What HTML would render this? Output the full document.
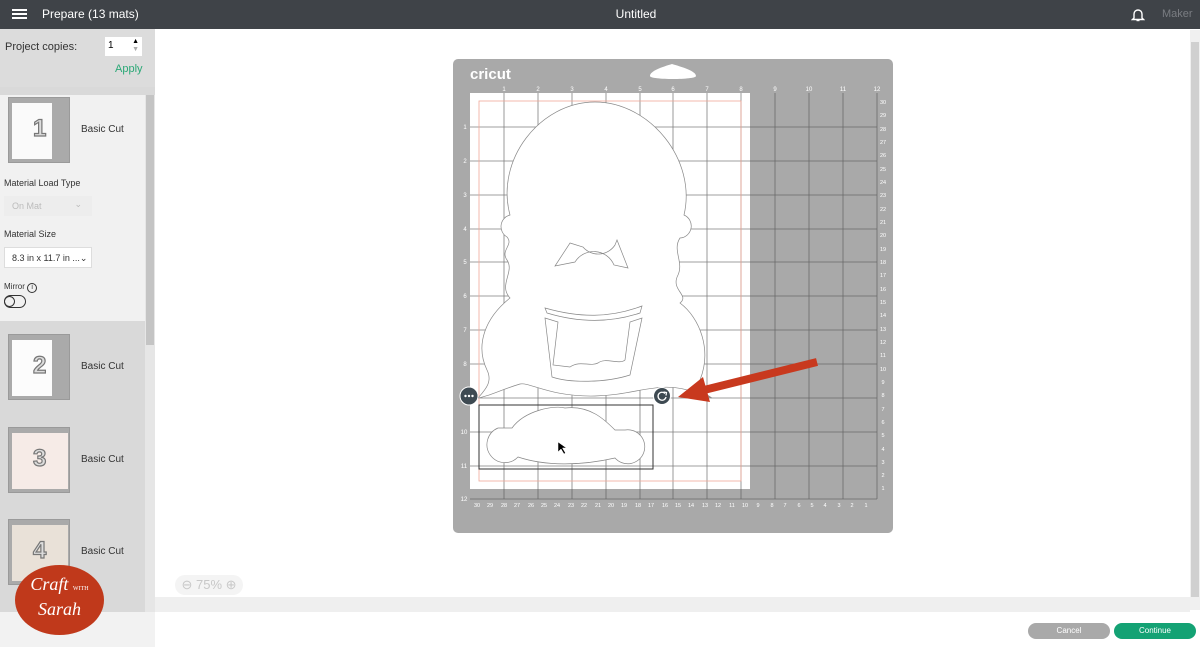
<!DOCTYPE html>
<html><head><meta charset="utf-8"><style>
*{margin:0;padding:0;box-sizing:border-box}
body{width:1200px;height:647px;overflow:hidden;background:#fff;font-family:"Liberation Sans",sans-serif;position:relative}
.abs{position:absolute}
.hdr{left:0;top:0;width:1200px;height:29px;background:#3f4348;color:#fff}
.lp{left:0;top:29px;width:155px;height:583px;background:#d9d9d9}
.t{font-size:10px;color:#333}
.thumb{position:absolute;left:8px;width:62px;height:66px;background:#aaa;border:1px solid #9a9a9a}
.num{position:absolute;font-size:24px;font-weight:bold;color:#ddd;-webkit-text-stroke:1.2px #777}
</style></head><body>
<div class="abs hdr">
  <div class="abs" style="left:12px;top:9px;width:15px;height:2px;background:#fff;box-shadow:0 4px 0 #fff,0 8px 0 #fff"></div>
  <div class="abs" style="left:42px;top:7px;font-size:12px">Prepare (13 mats)</div>
  <div class="abs" style="left:0;width:1272px;top:7px;text-align:center;font-size:12px">Untitled</div>
  <svg class="abs" style="left:1131px;top:7px" width="14" height="15" viewBox="0 0 14 15"><path d="M3 11V7a4 4 0 0 1 8 0v4l1.5 1.5h-11z" fill="none" stroke="#fff" stroke-width="1.4"/><path d="M5.5 13.5h3" stroke="#fff" stroke-width="1.4"/></svg>
  <div class="abs" style="left:1162px;top:8px;font-size:11px;color:#7a7d82">Maker</div>
</div>
<div class="abs lp">
  <div class="abs" style="left:0;top:0;width:155px;height:58px;background:#dcdcdc"></div>
  <div class="abs t" style="left:5px;top:12px;font-size:11px">Project copies:</div>
  <div class="abs" style="left:105px;top:8px;width:37px;height:19px;background:#fff;font-size:10px;padding:3px 0 0 3px">1<span style="position:absolute;right:3px;top:1px;font-size:7px;line-height:8px">▲<br><span style="color:#aaa">▼</span></span></div>
  <div class="abs" style="left:115px;top:34px;font-size:11px;color:#2aa876">Apply</div>
  <div class="abs" style="left:0;top:66px;width:145px;height:226px;background:#f1f1f1"></div>
  <div class="abs" style="left:145px;top:66px;width:10px;height:517px;background:#e6e6e6"></div>
  <div class="abs" style="left:146px;top:66px;width:8px;height:250px;background:#c4c4c4"></div>
  <div class="abs t" style="left:4px;top:149px;font-size:9px">Material Load Type</div>
  <div class="abs" style="left:4px;top:167px;width:88px;height:20px;background:#ededed;font-size:9px;color:#bbb;padding:5px 0 0 8px">On Mat<span style="position:absolute;right:10px;top:3px">⌄</span></div>
  <div class="abs t" style="left:4px;top:200px;font-size:9px">Material Size</div>
  <div class="abs" style="left:4px;top:218px;width:88px;height:21px;background:#fff;border:1px solid #ddd;font-size:9px;color:#333;padding:5px 0 0 7px">8.3 in x 11.7 in ...⌄</div>
  <div class="abs t" style="left:4px;top:253px;font-size:8px">Mirror <span style="display:inline-block;width:10px;height:10px;border:1px solid #333;border-radius:50%;font-size:7px;text-align:center;line-height:8px">i</span></div>
  <div class="abs" style="left:4px;top:266px;width:22px;height:13px;border:1.3px solid #333;border-radius:7px"><div style="width:11px;height:11px;border:1.3px solid #333;border-radius:50%;margin:-0.3px 0 0 -1px"></div></div>
  <div class="abs t" style="left:81px;top:95px;font-size:10px">Basic Cut</div>
  <div class="abs t" style="left:81px;top:332px;font-size:10px">Basic Cut</div>
  <div class="abs t" style="left:81px;top:425px;font-size:10px">Basic Cut</div>
  <div class="abs t" style="left:81px;top:517px;font-size:10px">Basic Cut</div>
</div>
<div class="thumb" style="top:97px"><div style="position:absolute;left:3px;top:5px;width:40px;height:56px;background:#fafafa"></div><div class="num" style="left:24px;top:17px">1</div></div>
<div class="thumb" style="top:334px"><div style="position:absolute;left:3px;top:5px;width:40px;height:56px;background:#fcfcfc"></div><div class="num" style="left:24px;top:17px">2</div></div>
<div class="thumb" style="top:427px"><div style="position:absolute;left:3px;top:5px;width:56px;height:56px;background:#f6ebe7"></div><div class="num" style="left:24px;top:17px">3</div></div>
<div class="thumb" style="top:519px"><div style="position:absolute;left:3px;top:5px;width:56px;height:56px;background:#e9e1d8"></div><div class="num" style="left:24px;top:17px">4</div></div>
<div class="abs" style="left:0;top:612px;width:155px;height:35px;background:#f2f2f2"></div>
<div class="abs" style="left:15px;top:565px;width:89px;height:70px;border-radius:50%;background:#c0391b;color:#fff;font-family:'Liberation Serif',serif;font-style:italic;text-align:center;overflow:hidden">
  <div style="font-size:18px;margin-top:10px;line-height:19px">Craft <span style="font-size:6px;font-style:normal">WITH</span></div>
  <div style="font-size:18px;line-height:20px">Sarah</div>
</div>
<div class="abs" style="left:155px;top:597px;width:1035px;height:15px;background:#efefef"></div>
<div class="abs" style="left:1190px;top:30px;width:10px;height:580px;background:#f0f0f0"></div>
<div class="abs" style="left:1191px;top:42px;width:8px;height:555px;background:#d0d0d0"></div>
<div class="abs" style="left:175px;top:575px;width:68px;height:20px;border-radius:10px;background:#f4f4f4;color:#c8c8c8;font-size:13px;padding-top:2px;text-align:center">⊖ 75% ⊕</div>
<div class="abs" style="left:1028px;top:623px;width:82px;height:16px;border-radius:8px;background:#a9a9a9;color:#fff;font-size:8px;text-align:center;line-height:16px">Cancel</div>
<div class="abs" style="left:1114px;top:623px;width:82px;height:16px;border-radius:8px;background:#14a274;color:#fff;font-size:8px;text-align:center;line-height:16px">Continue</div>

<svg class="abs" style="left:0;top:0" width="1200" height="647" font-family="Liberation Sans" >
<rect x="453" y="59" width="440" height="474" rx="5" fill="#a9a9a9"/>
<path d="M650 76 C650 71 662 67 672 64 C682 67 696 71 696 76 C696 80 650 80 650 76 Z" fill="#fff"/>
<text x="470" y="79" font-size="15" font-weight="bold" fill="#fff">cricut</text>
<rect x="470" y="93" width="280" height="396" fill="#fff"/>
<g stroke="#555" stroke-width="0.8" opacity="0.75">
<path d="M504 93V499M538 93V499M572 93V499M606 93V499M640 93V499M673 93V499M707 93V499M741 93V499M775 93V499M809 93V499M843 93V499M877 93V499"/>
<path d="M470 127H877M470 161H877M470 195H877M470 229H877M470 262H877M470 296H877M470 330H877M470 364H877M470 398H877M470 432H877M470 466H877M470 499H877"/>
</g>
<rect x="479" y="101" width="262" height="380" fill="none" stroke="#f0a898" stroke-width="0.8"/>
<g font-size="6" fill="#fff" text-anchor="middle">
<text x="504" y="91">1</text><text x="538" y="91">2</text><text x="572" y="91">3</text><text x="606" y="91">4</text><text x="640" y="91">5</text><text x="673" y="91">6</text><text x="707" y="91">7</text><text x="741" y="91">8</text><text x="775" y="91">9</text><text x="809" y="91">10</text><text x="843" y="91">11</text><text x="877" y="91">12</text>
<text x="465" y="129">1</text><text x="465" y="163">2</text><text x="465" y="197">3</text><text x="465" y="231">4</text><text x="465" y="264">5</text><text x="465" y="298">6</text><text x="465" y="332">7</text><text x="465" y="366">8</text><text x="465" y="400">9</text><text x="464" y="434">10</text><text x="464" y="468">11</text><text x="464" y="501">12</text>
</g>
<g font-size="5.5" fill="#fff" text-anchor="middle">
<text x="883" y="104">30</text><text x="883" y="117">29</text><text x="883" y="131">28</text><text x="883" y="144">27</text><text x="883" y="157">26</text><text x="883" y="171">25</text><text x="883" y="184">24</text><text x="883" y="197">23</text><text x="883" y="211">22</text><text x="883" y="224">21</text><text x="883" y="237">20</text><text x="883" y="251">19</text><text x="883" y="264">18</text><text x="883" y="277">17</text><text x="883" y="291">16</text><text x="883" y="304">15</text><text x="883" y="317">14</text><text x="883" y="331">13</text><text x="883" y="344">12</text><text x="883" y="357">11</text><text x="883" y="371">10</text><text x="883" y="384">9</text><text x="883" y="397">8</text><text x="883" y="411">7</text><text x="883" y="424">6</text><text x="883" y="437">5</text><text x="883" y="451">4</text><text x="883" y="464">3</text><text x="883" y="477">2</text><text x="883" y="490">1</text>
<text x="477" y="507">30</text><text x="490" y="507">29</text><text x="504" y="507">28</text><text x="517" y="507">27</text><text x="531" y="507">26</text><text x="544" y="507">25</text><text x="557" y="507">24</text><text x="571" y="507">23</text><text x="584" y="507">22</text><text x="598" y="507">21</text><text x="611" y="507">20</text><text x="624" y="507">19</text><text x="638" y="507">18</text><text x="651" y="507">17</text><text x="665" y="507">16</text><text x="678" y="507">15</text><text x="691" y="507">14</text><text x="705" y="507">13</text><text x="718" y="507">12</text><text x="732" y="507">11</text><text x="745" y="507">10</text><text x="758" y="507">9</text><text x="772" y="507">8</text><text x="785" y="507">7</text><text x="799" y="507">6</text><text x="812" y="507">5</text><text x="825" y="507">4</text><text x="839" y="507">3</text><text x="852" y="507">2</text><text x="866" y="507">1</text>
</g>
<g fill="#fff" stroke="#888" stroke-width="0.7">
<path d="M510 215 C495 160 540 102 595 102 C650 102 697 160 684 215 A12 12 0 0 1 680 238 C672 250 684 262 678 275 C670 290 690 295 680 303 C700 318 712 350 700 380 C695 390 705 393 712 398 L700 394 C660 378 640 395 595 396 C550 397 530 382 520 384 C500 390 490 396 478 398 C485 390 493 382 487 370 C475 345 485 318 510 298 C498 285 515 272 507 260 C500 250 514 245 507 237 A12 12 0 0 1 510 215 Z"/>
<path d="M570 243 L583 247 A20 20 0 0 0 615 245 L617 240 L628 268 L614 265 A22 22 0 0 0 575 262 L555 266 Z"/>
<path d="M545 308 C580 318 610 318 642 306 L640 313 C610 323 580 323 547 313 Z"/>
<path d="M545 318 L558 322 L553 365 L570 367 C580 360 590 367 598 363 C605 357 620 365 625 360 L630 322 L642 318 L630 375 C605 383 570 383 552 377 Z"/>
<path d="M512 428 C525 410 555 405 565 408 C590 405 605 420 615 430 L625 430 A17 17 0 1 1 615 458 C580 466 545 466 518 457 A18 18 0 1 1 498 428 Z"/>
</g>
<rect x="479" y="405" width="174" height="64" fill="none" stroke="#333" stroke-width="1"/>
<path d="M558 442 l0 10 l3 -3 l3 5 l1.5 -1 l-3 -5 l4 0 z" fill="#000" stroke="#fff" stroke-width="0.5"/>
<circle cx="469" cy="396" r="9" fill="#3e4a52" stroke="#fff" stroke-width="1"/>
<circle cx="465.5" cy="396" r="1.2" fill="#fff"/><circle cx="469" cy="396" r="1.2" fill="#fff"/><circle cx="472.5" cy="396" r="1.2" fill="#fff"/>
<circle cx="662" cy="396" r="8.5" fill="#3e4a52" stroke="#fff" stroke-width="1"/>
<path d="M665 393.5 A4 4 0 1 0 666 397" fill="none" stroke="#fff" stroke-width="1.3"/><path d="M663.5 392 L666.5 392.5 L666 395.5" fill="none" stroke="#fff" stroke-width="1.2"/>
<line x1="817" y1="362" x2="700" y2="391" stroke="#c8391e" stroke-width="8"/>
<path d="M678 397 L703 377 L710 402 Z" fill="#c8391e"/>
</svg>
</body></html>
